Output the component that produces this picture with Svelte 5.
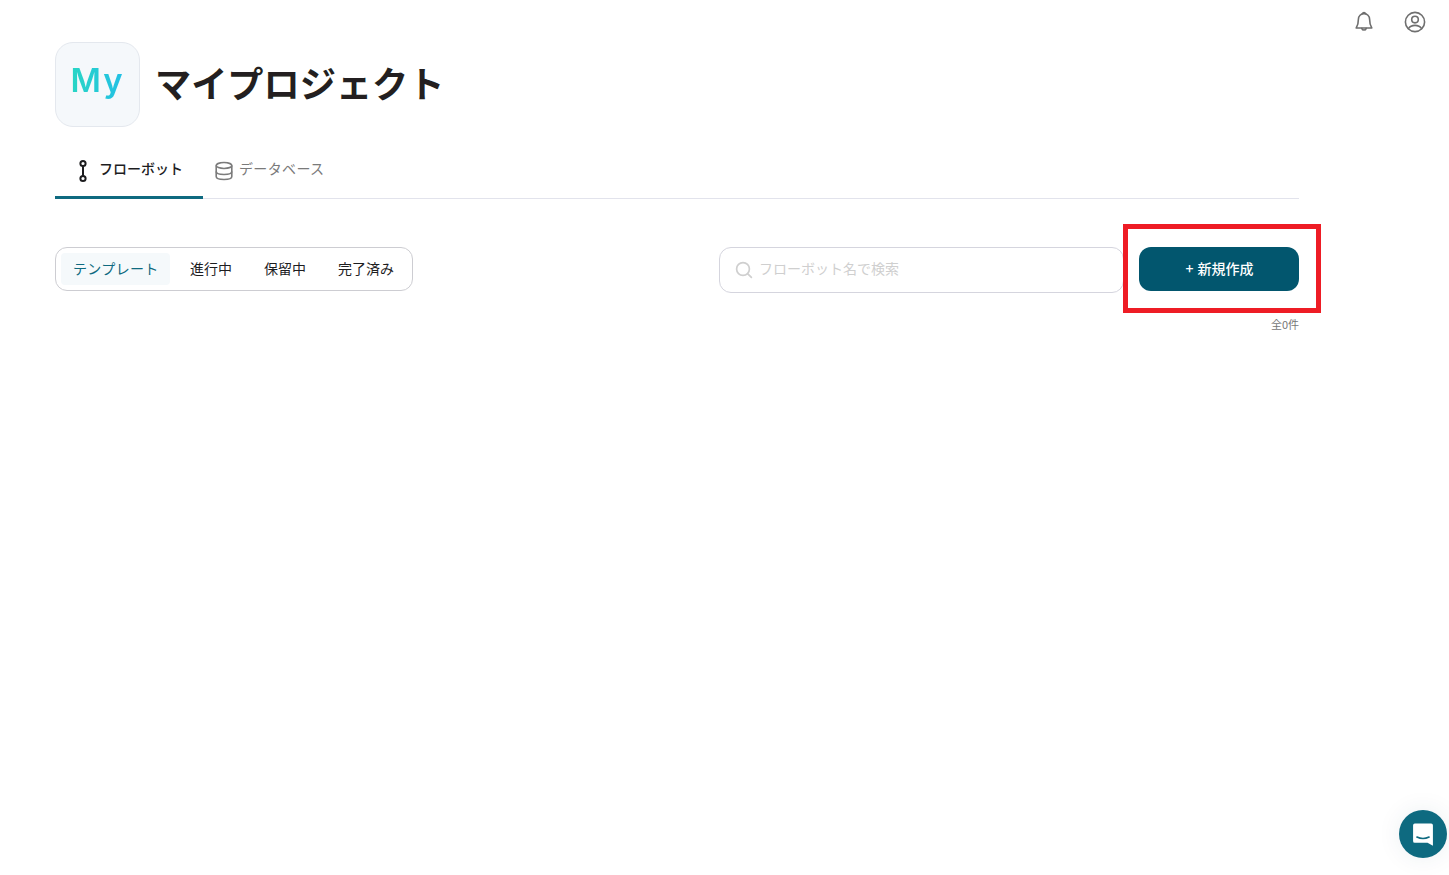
<script>
  const segments = ['テンプレート', '進行中', '保留中', '完了済み'];
</script>

<div class="page">
  <header class="topbar">
    <svg class="bell" width="24" height="24" viewBox="0 0 24 24" fill="none" stroke="#6f6f6f" stroke-width="1.6" stroke-linejoin="round" stroke-linecap="round">
      <path d="M12 3.6a5.6 5.6 0 0 0-5.6 5.6c0 5-1 7-2.2 8.8h15.6c-1.2-1.8-2.2-3.8-2.2-8.8A5.6 5.6 0 0 0 12 3.6z" />
      <path d="M10.4 3.8a1.7 1.7 0 0 1 3.2 0" />
      <path d="M9.8 18.4a2.3 2.3 0 0 0 4.4 0" />
    </svg>
    <svg class="user" width="24" height="24" viewBox="0 0 24 24" fill="none" stroke="#6f6f6f" stroke-width="1.6" stroke-linecap="round">
      <circle cx="12" cy="12" r="9.6" />
      <circle cx="12" cy="9.6" r="3.3" />
      <path d="M5.4 18.6c1.4-2.2 3.8-3.2 6.6-3.2s5.2 1 6.6 3.2" />
    </svg>
  </header>

  <main class="content">
    <section class="title-row">
      <div class="avatar"><span class="avatar-text">My</span></div>
      <h1>マイプロジェクト</h1>
    </section>

    <nav class="tabs">
      <div class="tab active">
        <svg width="16" height="24" viewBox="0 0 16 24" fill="none" stroke="#1d1d1f" stroke-width="2">
          <circle cx="8" cy="4.5" r="2.6" />
          <path d="M8 7.2v9.6" />
          <circle cx="8" cy="19.5" r="2.6" />
        </svg>
        <span>フローボット</span>
      </div>
      <div class="tab">
        <svg width="18" height="20" viewBox="0 0 18 20" fill="none" stroke="#7b7b7b" stroke-width="1.6">
          <ellipse cx="9" cy="4.5" rx="7.8" ry="3" />
          <path d="M1.2 4.5v11c0 1.7 2.4 3 7.8 3s7.8-1.3 7.8-3v-11" />
          <path d="M1.2 10.5c0 1.7 2.4 3 7.8 3s7.8-1.3 7.8-3" />
        </svg>
        <span>データベース</span>
      </div>
    </nav>

    <section class="toolbar">
      <div class="segments">
        {#each segments as s, i}
          <div class="segment" class:selected={i === 0}>{s}</div>
        {/each}
      </div>
      <div class="actions">
        <div class="search">
          <svg width="18" height="18" viewBox="0 0 18 18" fill="none" stroke="#cfcfcf" stroke-width="1.7" stroke-linecap="round">
            <circle cx="8" cy="8" r="6.4" />
            <path d="M12.8 12.8l3.6 3.6" />
          </svg>
          <span>フローボット名で検索</span>
        </div>
        <div class="create-wrap">
          <button class="create">+ 新規作成</button>
          <div class="highlight"></div>
        </div>
      </div>
    </section>

    <p class="count">全0件</p>
  </main>

  <button class="chat" aria-label="チャット">
    <svg width="28" height="28" viewBox="0 0 24 24">
      <path fill="#fff" d="M3.5 4.5A1.5 1.5 0 0 1 5 3h14a1.5 1.5 0 0 1 1.5 1.5V22l-4.6-2.4H5A1.5 1.5 0 0 1 3.5 18z" />
      <path fill="none" stroke="#0e6a80" stroke-width="1.4" stroke-linecap="round" d="M6.8 14.6c3.2 1.6 7.2 1.6 10.4 0" />
    </svg>
  </button>
</div>

<style>
  :global(body) {
    margin: 0;
    background: #fff;
    font-family: "Noto Sans CJK JP", "Noto Sans", sans-serif;
  }
  .page {
    position: relative;
    height: 875px;
    overflow: hidden;
    padding: 0 150px 0 55px;
    box-sizing: border-box;
  }
  .topbar {
    position: absolute;
    top: 10px;
    right: 22px;
    display: flex;
    gap: 27px;
  }
  .content {
    padding-top: 42px;
  }
  .title-row {
    display: flex;
    align-items: center;
    gap: 15px;
  }
  .avatar {
    width: 85px;
    height: 85px;
    box-sizing: border-box;
    border: 1px solid #e4e8ee;
    border-radius: 18px;
    background: #f5f8fb;
    display: flex;
    align-items: center;
    justify-content: center;
  }
  .avatar-text {
    font-family: "Inter", sans-serif;
    font-size: 33px;
    font-weight: 600;
    letter-spacing: 2px;
    line-height: 1;
    padding-bottom: 8px;
    background: linear-gradient(90deg, #28d6c4, #22bfe6);
    -webkit-background-clip: text;
    background-clip: text;
    color: transparent;
  }
  h1 {
    margin: 0 0 4px;
    font-size: 36.2px;
    font-weight: 700;
    line-height: 1;
    color: #231f20;
  }
  .tabs {
    display: flex;
    height: 55px;
    margin-top: 16px;
    border-bottom: 1px solid #e2e3ec;
  }
  .tab {
    display: flex;
    align-items: center;
    gap: 6px;
    height: 55px;
    font-size: 14px;
    line-height: 1;
    letter-spacing: 0.35px;
    color: #7a7a7a;
    padding-left: 12px;
    box-sizing: border-box;
  }
  .tab span {
    padding-bottom: 6px;
  }
  .tab.active {
    width: 148px;
    padding-left: 20px;
    gap: 8px;
    letter-spacing: 0;
    color: #1d1d1f;
    box-shadow: inset 0 -2px 0 #0e6a80, 0 1px 0 #0e6a80;
    font-weight: 500;
  }
  .toolbar {
    display: flex;
    justify-content: space-between;
    align-items: flex-start;
    margin-top: 48px;
  }
  .segments {
    display: flex;
    align-items: center;
    box-sizing: border-box;
    height: 44px;
    width: 358px;
    padding: 0 5px;
    border: 1px solid #cdcdd2;
    border-radius: 12px;
  }
  .segment {
    flex: none;
    height: 32px;
    display: flex;
    align-items: center;
    font-size: 14px;
    line-height: 1;
    white-space: nowrap;
    color: #1d1d1f;
    padding: 0 16px 3px;
    box-sizing: border-box;
  }
  .segment.selected {
    background: #f5f9fb;
    color: #0e6a80;
    letter-spacing: 0.35px;
    padding: 0 12px 3px 12px;
    border-radius: 4px;
    margin-right: 4px;
    width: 109px;
  }
  .actions {
    display: flex;
    gap: 15px;
  }
  .search {
    width: 405px;
    height: 46px;
    box-sizing: border-box;
    border: 1px solid #d5d5de;
    border-radius: 12px;
    display: flex;
    align-items: center;
    gap: 6px;
    padding-left: 15px;
    font-size: 14px;
    color: #cfcfcf;
  }
  .search span {
    padding-bottom: 4px;
  }
  .create-wrap {
    position: relative;
  }
  .create {
    display: block;
    width: 160px;
    height: 44px;
    border: 0;
    border-radius: 12px;
    background: #02566e;
    color: #fff;
    font: inherit;
    font-size: 14px;
    font-weight: 500;
    padding: 0 0 3px 1px;
    word-spacing: 1px;
    cursor: pointer;
  }
  .highlight {
    position: absolute;
    left: -16px;
    top: -23px;
    width: 198px;
    height: 89px;
    box-sizing: border-box;
    border: 5px solid #ee1c25;
    pointer-events: none;
  }
  .count {
    margin: 23px 0 0;
    text-align: right;
    font-size: 11px;
    line-height: 16px;
    color: #777;
  }
  .chat {
    position: absolute;
    left: 1399px;
    top: 810px;
    width: 48px;
    height: 48px;
    padding: 0;
    border: 0;
    border-radius: 50%;
    background: #0e6a80;
    display: flex;
    align-items: center;
    justify-content: center;
    box-shadow: 0 0 24px rgba(20, 60, 90, 0.08);
  }
</style>
